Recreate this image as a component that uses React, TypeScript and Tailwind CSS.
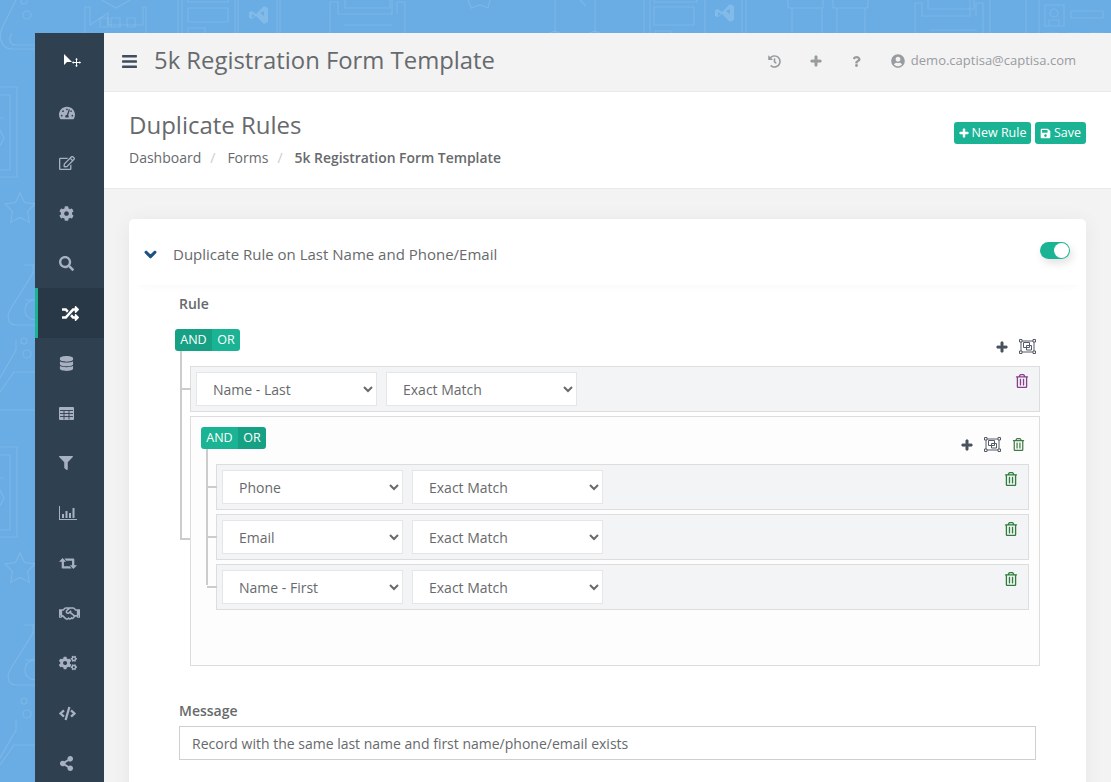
import React from 'react';
import {
  FaBars, FaChevronDown, FaCode, FaCog, FaCogs, FaDatabase, FaFilter,
  FaHistory, FaPlus, FaQuestion, FaRandom, FaRegEdit, FaRegHandshake, FaRegTrashAlt, FaSave,
  FaSearch, FaShareAlt, FaTachometerAlt, FaUserCircle,
} from 'react-icons/fa';

// font awesome 4 shapes the packages don't have
function TableIcon() {
  return (
    <svg width="15" height="13" viewBox="0 0 15 13">
      <rect width="15" height="13" rx="1" fill="currentColor" />
      <path d="M5 3.500v9M10 3.500v9M1 3.500h13M1 6.500h13M1 9.500h13" stroke="#2f4050" strokeWidth="0.900" fill="none" />
    </svg>
  );
}

function ChartIcon() {
  return (
    <svg width="18" height="14" viewBox="0 0 18 14" fill="currentColor">
      <path d="M0 0h1v13h17v1H0z" />
      <path d="M3 8h2v4H3zM6.500 5h2v7h-2zM10 7h2v5h-2zM13.500 2h2v10h-2z" />
    </svg>
  );
}

function RetweetIcon() {
  return (
    <svg width="18" height="13" viewBox="0 0 20 13" fill="currentColor">
      <path d="M0 4.500L4 0.500l4 4H5.500v5H12l2 2.500H4a1 1 0 0 1-1-1V4.500z" />
      <path d="M20 8.500l-4 4-4-4h2.500V3.500H8L6 1h10a1 1 0 0 1 1 1v6.500z" />
    </svg>
  );
}

function GroupIcon() {
  return (
    <svg width="17" height="15" viewBox="0 0 17 15" fill="none" stroke="#555b66" strokeWidth="1">
      <path d="M2 2h13v11H2z" />
      <path d="M.5.500h2.500v2.500H.5zM14 .500h2.500v2.500H14zM.5 12h2.500v2.500H.5zM14 12h2.500v2.500H14z" fill="#ffffff" />
      <path d="M4.500 3.500h6v5h-6z" />
      <path d="M7.500 6.500h5v4.500h-5z" />
    </svg>
  );
}

const navItems = [
  { node: <FaTachometerAlt size={16} /> },
  { node: <FaRegEdit size={16} /> },
  { node: <FaCog size={15} /> },
  { node: <FaSearch size={15} /> },
  { node: <FaRandom size={17} />, active: true },
  { node: <FaDatabase size={15} /> },
  { node: <TableIcon /> },
  { node: <FaFilter size={14} /> },
  { node: <ChartIcon /> },
  { node: <RetweetIcon /> },
  { node: <FaRegHandshake size={21} /> },
  { node: <FaCogs size={18} /> },
  { node: <FaCode size={17} /> },
  { node: <FaShareAlt size={15} /> },
];

function VsLogo({ x, y }: { x: number; y: number }) {
  return (
    <path
      transform={`translate(${x} ${y})`}
      fill="#ffffff"
      fillOpacity="0.16"
      stroke="none"
      d="M0 6l3-1 4 3 8-8 4 2v14l-4 2-8-8-4 3-3-1zM3 8v4l3-2zM11 7l4 3V5z"
    />
  );
}

function Pattern() {
  return (
    <svg className="absolute inset-0 w-full h-full" fill="none" stroke="#ffffff" strokeOpacity="0.12" strokeWidth="1.200">
      {/* left strip */}
      <path d="M16 0L2 28c-4 10 0 21 10 21h24M12 33c-4 6-2 12 4 12h20" />
      <circle cx="27" cy="15" r="4" />
      <circle cx="24" cy="1" r="3" />
      <path d="M0 87h17v90H0M0 95h10v75H0M0 118h4M0 130l4 8-4 8" />
      <path d="M20 193l4.500 9.500 10.500 1.500-7.500 7.500 1.800 11-9.300-5-9.300 5 1.800-11-7.500-7.500 10.500-1.500z" />
      <path d="M24 265h12M33 265v8L10 310c-4 8-1 15 6 15h20M25 300h11c-7 0-11 4-11 11 0 5 3 8 11 9" />
      <circle cx="24" cy="341" r="3" />
      <circle cx="27" cy="354" r="4" />
      <path d="M16 340v10L0 378M36 372H14L0 392M0 410h36" />
      <path d="M0 447h17v90H0M0 455h10v75H0M0 478h4M0 490l4 8-4 8" />
      <path d="M20 553l4.500 9.500 10.500 1.500-7.500 7.500 1.800 11-9.300-5-9.300 5 1.800-11-7.500-7.500 10.500-1.500z" />
      <path d="M24 625h12M33 625v8L10 670c-4 8-1 15 6 15h20M25 660h11c-7 0-11 4-11 11 0 5 3 8 11 9" />
      <circle cx="24" cy="701" r="3" />
      <circle cx="27" cy="714" r="4" />
      <path d="M16 720v10L0 758M36 745H14L0 765" />

      {/* top strip */}
      <path d="M102 0l14 8 14-8M85 33V7h5v18l18-12v12h35V7h3v26" />
      <path d="M100 18h8v9h-8zM111 18h9v9h-9zM127 18h8v9h-8z" />
      <path d="M178 0v33M182 0v33M188 0v2h40V0M188 8h40v14h-40zM188 33v-5h17v5M235 0v33M238 0v33M277 0v33M280 0v33" />
      <VsLogo x={249} y={6} />
      <path d="M330 33V2h8v12h54V0M405 33V2h-8v12M345 0v8h45V0M344 25h48" />
      <path d="M468 0l3 8 9-3 8 3 2-8" />
      <path d="M555 0v33M595 0v33M580 0l6 6M550 33c3-2 7-2 10 0M590 33c3-2 7-2 10 0" />
      <path d="M644 0v33M650 0v33M654 0v2h43V0M654 7h40v18h-40zM655 33v-2h16v2M705 0v33M742 0v33M746 0v33" />
      <VsLogo x={715} y={4} />
      <path d="M788 0v6c0 1 1 2 2 2h32c1 0 1-1 1-2V0M792 8v25M822 8v25M833 0v6c0 1 1 2 2 2h31c1 0 2-1 2-2V0M837 8v25M865 8v25" />
      <path d="M915 33V3h7v13h48V0M983 33V3h-7v13M928 0v9h46V0M929 30h48M990 0v33M1026 0v33M1039 0v33" />
      <path d="M1045 5h19v21h-19z" />
      <circle cx="1054" cy="13" r="4" />
      <path d="M1049 25v-5h10v5M1071 11h32v7h-32zM1045 33h13M1068 33h13M1090 33h13" />
    </svg>
  );
}

function LogoMark() {
  return (
    <svg width="18" height="14" viewBox="0 0 18 14" fill="#ffffff">
      <path d="M0 0v11l3-3h5z" />
      <path d="M12.500 4l1.500 1.500h-1v2.500h2.500v-1L17 8.500 15.500 10V9H13v2.500h1L12.500 13 11 11.500h1V9H9.500v1L8 8.500 9.500 7v1H12V5.500h-1z" />
    </svg>
  );
}

function AndOr({ active }: { active: 'AND' | 'OR' }) {
  return (
    <div className="flex h-[22px] w-[65px] rounded-[3px] overflow-hidden text-[12.500px] leading-[22px] text-white">
      <span className={`w-[37px] text-center ${active === 'AND' ? 'bg-[#17a184]' : 'bg-[#1ab394]'}`}>AND</span>
      <span className={`flex-1 text-center ${active === 'OR' ? 'bg-[#17a184]' : 'bg-[#1ab394]'}`}>OR</span>
    </div>
  );
}

function Select({ value, width }: { value: string; width: string }) {
  return (
    <select
      defaultValue={value}
      className={`${width} h-[34px] bg-white border border-[#e5e6e7] pl-[12px] text-[14px] text-[#676a6c] outline-none`}
    >
      <option>{value}</option>
    </select>
  );
}

function RuleRow({ field, trashColor }: { field: string; trashColor: string }) {
  return (
    <div className="relative h-[46px] bg-[#f3f4f6] border border-[#dddddd] flex gap-[9px] pl-[5px] pt-[5px]">
      <Select value={field} width="w-[181px]" />
      <Select value="Exact Match" width="w-[191px]" />
      <div className="absolute right-[10px] top-[7px] flex">
        <FaRegTrashAlt size={14} color={trashColor} />
      </div>
      <span className="absolute left-[-10px] top-[21px] w-[10px] h-[2px] bg-[#cccccc]" />
    </div>
  );
}

export default function App() {
  return (
    <div className="relative h-[782px] w-[1111px] overflow-hidden bg-[#6aade4] font-['Open_Sans',sans-serif] text-[#676a6c]">
      <Pattern />
      <div className="absolute left-[35px] top-[33px] right-0 bottom-0 flex">
        <nav className="w-[69px] shrink-0 bg-[#2f4050] flex flex-col">
          <div className="h-[55px] shrink-0 flex items-center pl-[29px]">
            <LogoMark />
          </div>
          {navItems.map((item, i) => (
            <div
              key={i}
              className={`h-[50px] shrink-0 flex items-center ${item.active ? 'bg-[#293846] border-l-[3px] border-[#1ab394] text-white pl-[24px]' : 'text-[#a7b1c2] pl-[24px]'}`}
            >
              {item.node}
            </div>
          ))}
        </nav>

        <main className="flex-1 min-w-0 bg-[#f3f3f4] flex flex-col">
          <header className="h-[59px] shrink-0 bg-[#f3f3f4] border-b border-[#e7eaec] flex items-center pl-[17px] pr-[35px] pb-[2px]">
            <FaBars size={17} className="text-[#3f4d5e]" />
            <h2 className="ml-[16px] text-[23.850px] text-[#676a6c]">5k Registration Form Template</h2>
            <div className="ml-auto flex items-center text-[#999c9e] text-[13px]">
              <FaHistory size={13} />
              <FaPlus size={12} className="ml-[29px]" stroke="currentColor" strokeWidth={30} />
              <FaQuestion size={11} className="ml-[29px]" />
              <FaUserCircle size={14} className="ml-[29px]" />
              <span className="ml-[6px]">demo.captisa@captisa.com</span>
            </div>
          </header>

          <section className="h-[97px] shrink-0 bg-white border-b border-[#e7eaec] flex pl-[25px] pr-[25px]">
            <div>
              <h1 className="mt-[17px] text-[24px] leading-[32px] text-[#676a6c]">Duplicate Rules</h1>
              <div className="mt-[7px] flex items-center text-[14px] leading-[20px]">
                <span>Dashboard</span>
                <span className="ml-[9px] mr-[12px] text-[#cccccc]">/</span>
                <span>Forms</span>
                <span className="ml-[9px] mr-[10px] text-[#cccccc]">/</span>
                <strong className="font-semibold ml-[2px] text-[13.900px]">5k Registration Form Template</strong>
              </div>
            </div>
            <div className="ml-auto mt-[30px] flex gap-[4px] text-white text-[12.500px]">
              <button className="h-[22px] w-[77px] rounded-[3px] bg-[#1ab394] flex items-center justify-center gap-[3px]">
                <FaPlus size={10} stroke="currentColor" strokeWidth={30} /> New Rule
              </button>
              <button className="h-[22px] w-[51px] rounded-[3px] bg-[#1ab394] flex items-center justify-center gap-[3px]">
                <FaSave size={11} /> Save
              </button>
            </div>
          </section>

          <div className="flex-1 min-h-0 pt-[30px] pl-[25px] pr-[25px]">
            <div className="h-[600px] bg-white rounded-t-[5px] shadow-[0_2px_20px_rgba(0,0,0,0.06)]">
              <div className="relative h-[66px] flex items-center pl-[15px] pt-[4px] rounded-t-[5px] shadow-[0_8px_12px_-10px_rgba(0,0,0,0.05)]">
                <FaChevronDown size={13} className="text-[#1c4f80]" stroke="currentColor" strokeWidth={40} />
                <span className="ml-[16px] text-[15px]">Duplicate Rule on Last Name and Phone/Email</span>
                <div className="absolute right-[16px] top-[23px] w-[30px] h-[17px] rounded-full bg-[#1ab394] shadow-[2px_4px_8px_rgba(0,0,0,0.12)]">
                  <span className="absolute right-[1px] top-[1px] w-[15px] h-[15px] rounded-full bg-white" />
                </div>
              </div>

              <div className="pl-[46px] pr-[46px]">
                <div className="pl-[4px] text-[14px] font-semibold leading-[20px] mt-[9px]">Rule</div>

                <div className="relative mt-[15px]">
                  <AndOr active="AND" />
                  <div className="absolute right-[4px] top-[10px] flex items-center gap-[11px] text-[#49525d]">
                    <FaPlus size={12} stroke="currentColor" strokeWidth={30} />
                    <GroupIcon />
                  </div>

                  <div className="relative pl-[15px] pt-[15px]">
                    <span className="absolute left-[5px] top-0 w-[2px] h-[189px] bg-[#cccccc]" />
                    <span className="absolute left-[5px] top-[187px] w-[10px] h-[2px] rounded-bl-[2px] bg-[#cccccc]" />
                    <RuleRow field="Name - Last" trashColor="#8a3f8a" />

                    <div className="relative mt-[4px] h-[250px] bg-[#fdfdfd] border border-[#dddddd] pl-[10px] pr-[10px] pt-[10px]">
                      <AndOr active="OR" />
                      <div className="absolute right-[14px] top-[20px] flex items-center gap-[11px] text-[#49525d]">
                        <FaPlus size={12} stroke="currentColor" strokeWidth={30} />
                        <GroupIcon />
                        <FaRegTrashAlt size={13} color="#3f7a45" />
                      </div>
                      <div className="relative pl-[15px] pt-[15px] flex flex-col gap-[4px]">
                        <span className="absolute left-[5px] top-0 w-[2px] h-[136px] bg-[#cccccc]" />
                        <RuleRow field="Phone" trashColor="#2f7d3b" />
                        <RuleRow field="Email" trashColor="#2f7d3b" />
                        <RuleRow field="Name - First" trashColor="#2f7d3b" />
                      </div>
                    </div>
                  </div>
                </div>

                <div className="mt-[35px] pl-[4px] pr-[4px]">
                  <div className="text-[14px] font-semibold leading-[20px]">Message</div>
                  <input
                    readOnly
                    value="Record with the same last name and first name/phone/email exists"
                    className="mt-[5px] w-[857px] h-[34px] border border-[#cfcfcf] px-[12px] text-[14px] text-[#676a6c] outline-none"
                  />
                </div>
              </div>
            </div>
          </div>
        </main>
      </div>
    </div>
  );
}
